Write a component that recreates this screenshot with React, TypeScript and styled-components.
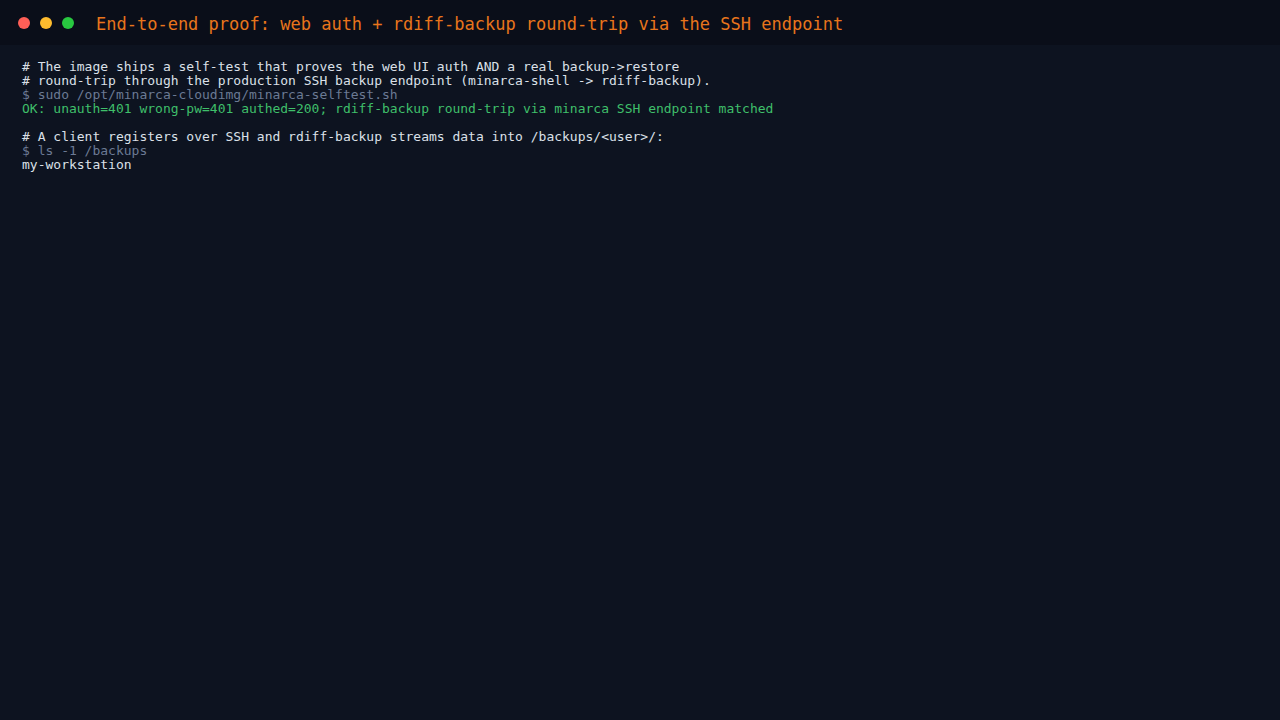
import React from "react";
import styled, { createGlobalStyle } from "styled-components";

const Global = createGlobalStyle`
  html, body { margin: 0; padding: 0; background: #0d1320; }
  body { font-family: "DejaVu Sans Mono", monospace; }
`;

const Page = styled.div`
  width: 1280px;
  height: 720px;
  background: #0d1320;
  display: flex;
  flex-direction: column;
  overflow: hidden;
`;

const TitleBar = styled.div`
  height: 45px;
  background: #0a0e19;
  display: flex;
  align-items: center;
  padding: 0 0 0 18px;
  box-sizing: border-box;
`;

const Dots = styled.div`
  display: flex;
  gap: 10px;
  margin-right: 22px;
`;

const Dot = styled.span<{ $c: string }>`
  width: 12px;
  height: 12px;
  border-radius: 50%;
  background: ${(p) => p.$c};
  display: block;
`;

const Title = styled.div`
  font-family: "DejaVu Sans Mono", monospace;
  font-size: 17px;
  color: #e8751c;
  line-height: 20px;
  margin-top: 2px;
`;

const Body = styled.pre`
  margin: 0;
  padding: 15px 22px;
  font-family: "DejaVu Sans Mono", monospace;
  font-size: 13px;
  line-height: 14px;
  white-space: pre;
`;

const Line = styled.div<{ $kind?: "cmt" | "cmd" | "ok" | "out" }>`
  height: 14px;
  color: ${(p) =>
    p.$kind === "cmd" ? "#6b7a94" : p.$kind === "ok" ? "#3fbf6a" : "#dbe0e8"};
`;

const lines: { t: string; k?: "cmt" | "cmd" | "ok" | "out" }[] = [
  { t: "# The image ships a self-test that proves the web UI auth AND a real backup->restore", k: "cmt" },
  { t: "# round-trip through the production SSH backup endpoint (minarca-shell -> rdiff-backup).", k: "cmt" },
  { t: "$ sudo /opt/minarca-cloudimg/minarca-selftest.sh", k: "cmd" },
  { t: "OK: unauth=401 wrong-pw=401 authed=200; rdiff-backup round-trip via minarca SSH endpoint matched", k: "ok" },
  { t: "" },
  { t: "# A client registers over SSH and rdiff-backup streams data into /backups/<user>/:", k: "cmt" },
  { t: "$ ls -1 /backups", k: "cmd" },
  { t: "my-workstation", k: "out" },
];

export default function App() {
  return (
    <Page>
      <Global />
      <TitleBar>
        <Dots>
          <Dot $c="#ff5f57" />
          <Dot $c="#febc2e" />
          <Dot $c="#28c840" />
        </Dots>
        <Title>End-to-end proof: web auth + rdiff-backup round-trip via the SSH endpoint</Title>
      </TitleBar>
      <Body>
        {lines.map((l, i) => (
          <Line key={i} $kind={l.k}>
            {l.t}
          </Line>
        ))}
      </Body>
    </Page>
  );
}
